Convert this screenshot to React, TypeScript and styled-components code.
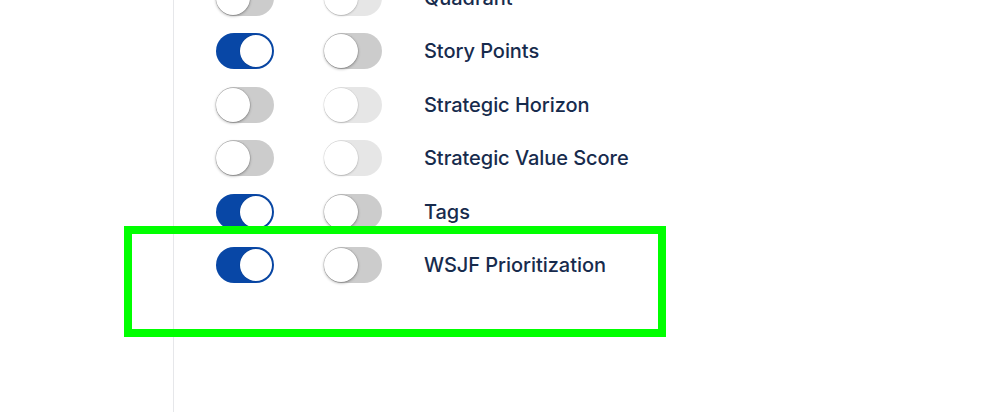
import { styled, createGlobalStyle } from "styled-components";

const GlobalStyle = createGlobalStyle`
  html, body {
    margin: 0;
    padding: 0;
    background: #ffffff;
    overflow: hidden;
  }
  body {
    font-family: Inter, "Noto Sans", "Liberation Sans", sans-serif;
  }
`;

export const Page = styled.div`
  position: relative;
  width: 999px;
  height: 412px;
  display: flex;
  overflow: hidden;
`;

export const Gutter = styled.div`
  width: 173px;
  flex-shrink: 0;
  border-right: 1px solid #e6e7ea;
`;

export const FieldList = styled.div`
  margin-top: -29px;
  padding-left: 42px;
  display: flex;
  flex-direction: column;
`;

export const FieldRow = styled.div`
  height: 53.5px;
  display: grid;
  grid-template-columns: 58px 58px auto;
  column-gap: 50px;
  align-items: center;
  & > :nth-child(3) {
    margin-left: -8px;
  }
`;

type TrackKind = "on" | "off" | "disabled";

export interface ITrack {
  $kind: TrackKind;
}

const trackColor: Record<TrackKind, string> = {
  on: "#0847a6",
  off: "#cccccc",
  disabled: "#e6e6e6",
};

export const Track = styled.div<ITrack>`
  box-sizing: border-box;
  width: 58px;
  height: 36px;
  border-radius: 18px;
  padding: 1px;
  background: ${(p) => trackColor[p.$kind]};
  display: flex;
  justify-content: ${(p) => (p.$kind === "on" ? "flex-end" : "flex-start")};
  align-items: center;
  padding-right: ${(p) => (p.$kind === "on" ? "2px" : "1px")};
`;

export const Knob = styled.div<ITrack>`
  width: ${(p) => (p.$kind === "on" ? "32px" : "34px")};
  height: ${(p) => (p.$kind === "on" ? "32px" : "34px")};
  border-radius: 50%;
  background: #ffffff;
  margin-left: ${(p) => (p.$kind === "on" ? "0" : "-1px")};
  box-shadow: ${(p) =>
    p.$kind === "disabled"
      ? "0 1px 2px rgba(0, 0, 0, 0.18), 0 0 0 0.5px rgba(0, 0, 0, 0.08)"
      : p.$kind === "on"
      ? "0 0 0 0.5px rgba(0, 0, 0, 0.1)"
      : "0 1px 3px rgba(0, 0, 0, 0.35), 0 0 0 0.5px rgba(0, 0, 0, 0.15)"};
`;

export const Label = styled.span`
  font-size: 20px;
  font-weight: 500;
  color: #172b4d;
  white-space: nowrap;
  letter-spacing: -0.05px;
`;

export const Highlight = styled.div`
  position: absolute;
  left: 124px;
  top: 226px;
  width: 542px;
  height: 111px;
  box-sizing: border-box;
  border: 8px solid #00ff00;
  pointer-events: none;
`;

const Toggle: React.FC<{ kind: TrackKind }> = ({ kind }) => (
  <Track $kind={kind}>
    <Knob $kind={kind} />
  </Track>
);

const fields: { name: string; shown: TrackKind; required: TrackKind }[] = [
  { name: "Quadrant", shown: "off", required: "disabled" },
  { name: "Story Points", shown: "on", required: "off" },
  { name: "Strategic Horizon", shown: "off", required: "disabled" },
  { name: "Strategic Value Score", shown: "off", required: "disabled" },
  { name: "Tags", shown: "on", required: "off" },
  { name: "WSJF Prioritization", shown: "on", required: "off" },
];

const App: React.FC = () => {
  return (
    <>
      <GlobalStyle />
      <Page>
        <Gutter />
        <FieldList>
          {fields.map((f) => (
            <FieldRow key={f.name}>
              <Toggle kind={f.shown} />
              <Toggle kind={f.required} />
              <Label>{f.name}</Label>
            </FieldRow>
          ))}
        </FieldList>
        <Highlight />
      </Page>
    </>
  );
};

export default App;
